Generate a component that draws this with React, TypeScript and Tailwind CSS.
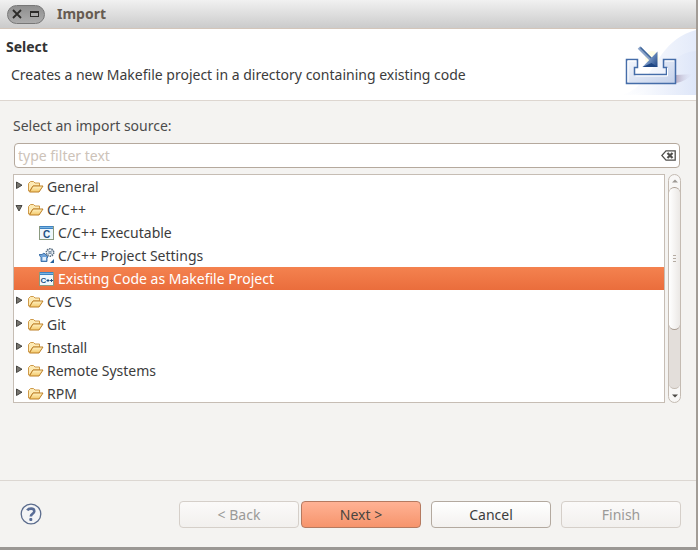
import type { ReactNode } from "react";

function FolderIcon() {
  return (
    <svg width="16" height="16" viewBox="0 0 16 16" className="shrink-0" aria-hidden="true">
      <defs>
        <linearGradient id="folderFill" x1="0" y1="0" x2="0" y2="1">
          <stop offset="0" stopColor="#fff3c4" />
          <stop offset="1" stopColor="#f3c768" />
        </linearGradient>
      </defs>
      <path d="M.5 12V4.500l2-2h3l1.500 1.500h4.500V7H5l-3.500 5z" fill="#fdeab4" stroke="#cf9a4a" />
      <path d="M5 7h10l-4 6H1.500z" fill="url(#folderFill)" stroke="#bd8028" strokeLinejoin="round" />
    </svg>
  );
}

function CodeIcon({ label }: { label: string }) {
  const wide = label.length > 1;
  return (
    <svg width="16" height="16" viewBox="0 0 16 16" className="shrink-0" aria-hidden="true">
      <rect x=".5" y="1.500" width="14" height="13" fill="#eff6fb" stroke="#8b9a80" />
      <rect x="1" y="1" width="13" height="3" fill="#3f82c2" />
      <rect x="1" y="2" width="13" height="1" fill="#78b4e2" />
      <text
        x={wide ? 1.5 : 7.5}
        y={wide ? 12 : 12.5}
        textAnchor={wide ? "start" : "middle"}
        fontFamily="'Liberation Sans', sans-serif"
        fontWeight="bold"
        fontSize={wide ? 8 : 10}
        fill="#1d4f84"
      >
        {label[0]}
      </text>
      {wide && <path d="M7.500 9.500h3M9 8v3M11 9.500h3M12.500 8v3" stroke="#1d4f84" />}
    </svg>
  );
}

function SettingsIcon() {
  return (
    <svg width="16" height="16" viewBox="0 0 16 16" className="shrink-0" aria-hidden="true">
      <circle cx="11" cy="4.500" r="3.700" fill="#f4f8fc" stroke="#5b6f82" strokeWidth="1.500" strokeDasharray="1.500 .8" />
      <path d="M8.500 2l5 5M13.500 2l-5 5" stroke="#526b84" strokeWidth=".8" />
      <circle cx="11" cy="4.500" r="1" fill="#fff" stroke="#3f5f80" strokeWidth=".7" />
      <path d="M0 6.500h3l2-1.500 4 4-1 1v3.500H2V9.500z" fill="#6fa2d8" stroke="#376ca6" strokeWidth=".9" />
      <path d="M3.500 9h3.500v3.500H3.500z" fill="#e1eefa" />
      <path d="M15 11v4h-4z" fill="#24619c" />
    </svg>
  );
}

function Arrow({ open }: { open?: boolean }) {
  return (
    <svg width="8" height="9" viewBox="0 0 8 9" className="shrink-0" aria-hidden="true">
      <path
        d={open ? "M1 1.500h6L4 7z" : "M1.500 1v6.500L7 4.200z"}
        fill="#77756f"
        stroke="#3c3b37"
        strokeWidth=".9"
      />
    </svg>
  );
}

function ImportBanner() {
  return (
    <svg width="75" height="66" viewBox="0 0 75 66" className="shrink-0" aria-hidden="true">
      <defs>
        <linearGradient id="sweep" x1="0" y1="0" x2="1" y2="0">
          <stop offset="0" stopColor="#ffffff" />
          <stop offset="1" stopColor="#dbe4f8" />
        </linearGradient>
        <linearGradient id="tray" x1="0" y1="0" x2="1" y2="1">
          <stop offset="0" stopColor="#f5f8fd" />
          <stop offset="1" stopColor="#c3d0ea" />
        </linearGradient>
        <linearGradient id="trayShadow" x1="0" y1="0" x2="1" y2="0">
          <stop offset="0" stopColor="#b9aec4" />
          <stop offset="1" stopColor="#d9e2f7" stopOpacity="0" />
        </linearGradient>
        <linearGradient id="arrowHead" x1="0" y1=".3" x2="1" y2="1">
          <stop offset="0" stopColor="#c3d4ec" />
          <stop offset=".5" stopColor="#6486b8" />
          <stop offset="1" stopColor="#1d4484" />
        </linearGradient>
      </defs>
      <path d="M0 66C20 62 30 40 41 25 50 13 60 5 75 1v65z" fill="url(#sweep)" opacity=".75" />
      <path d="M10 66C30 62 38 48 48 36c8-9 16-13 27-14v44z" fill="url(#sweep)" opacity=".7" />
      <path d="M55 54V46l17-1c-4 4-10 8-17 9z" fill="url(#trayShadow)" />
      <circle cx="31" cy="29" r="7" fill="#fffce0" opacity=".8" />
      <path
        d="M5.500 30.500h11v8h-3v7h32v-7h-3v-8h12v24h-49z"
        fill="url(#tray)"
        stroke="#456da9"
        strokeWidth="1.500"
      />
      <path d="M15 32h-8v21M44 32h9M14.500 47h32v-8" stroke="#ffffff" fill="none" />
      <path d="M18 18.500l12 12" stroke="#8aa3c8" strokeWidth="3.500" />
      <path d="M19.500 18.500l12 12" stroke="#3f6699" strokeWidth="1.400" />
      <path d="M36.500 22.500V38H21.500z" fill="url(#arrowHead)" />
      <path d="M36.500 38h-15l9-4z" fill="#1e4684" />
    </svg>
  );
}

type Node = { label: string; icon: ReactNode; level: number; open?: boolean; selected?: boolean };

const nodes: Node[] = [
  { label: "General", icon: <FolderIcon />, level: 1 },
  { label: "C/C++", icon: <FolderIcon />, level: 1, open: true },
  { label: "C/C++ Executable", icon: <CodeIcon label="C" />, level: 2 },
  { label: "C/C++ Project Settings", icon: <SettingsIcon />, level: 2 },
  { label: "Existing Code as Makefile Project", icon: <CodeIcon label="C++" />, level: 2, selected: true },
  { label: "CVS", icon: <FolderIcon />, level: 1 },
  { label: "Git", icon: <FolderIcon />, level: 1 },
  { label: "Install", icon: <FolderIcon />, level: 1 },
  { label: "Remote Systems", icon: <FolderIcon />, level: 1 },
  { label: "RPM", icon: <FolderIcon />, level: 1 },
];

function TreeRow({ node }: { node: Node }) {
  const top = node.level === 1;
  return (
    <li
      role="treeitem"
      aria-level={node.level}
      aria-expanded={top ? !!node.open : undefined}
      aria-selected={!!node.selected}
      className={`flex h-[23px] items-center whitespace-nowrap ${top ? "pl-px" : "pl-[25px]"} ${
        node.selected ? "bg-linear-to-b from-[#f4824f] to-[#ea6d3c] text-white" : ""
      }`}
    >
      {top && (
        <span className="mr-[5px] flex pb-[2px]">
          <Arrow open={node.open} />
        </span>
      )}
      {node.icon}
      <span className="ml-[3px]">{node.label}</span>
    </li>
  );
}

function Scrollbar() {
  return (
    <div
      aria-hidden="true"
      className="flex w-[13px] shrink-0 flex-col overflow-hidden rounded-full border border-[#c4bbb2] bg-[#f8f7f6]"
    >
      <div className="flex h-[12px] items-center justify-center">
        <svg width="6" height="4" viewBox="0 0 6 4">
          <path d="M0 3.500L3 .5l3 3z" fill="#9d9994" />
        </svg>
      </div>
      <div className="flex flex-1 flex-col rounded-t-full rounded-b-full border-b border-[#c4bbb2] bg-[#e3deda]">
        <div className="flex h-[143px] flex-col items-center justify-center gap-[2px] rounded-full border-y border-[#a99d92] bg-linear-to-r from-white to-[#ebe8e5]">
          <span className="h-px w-[3px] bg-[#b5aca3]" />
          <span className="h-px w-[3px] bg-[#b5aca3]" />
          <span className="h-px w-[3px] bg-[#b5aca3]" />
        </div>
      </div>
      <div className="flex h-[13px] items-center justify-center">
        <svg width="6" height="4" viewBox="0 0 6 4">
          <path d="M0 .5h6l-3 3z" fill="#4c4a46" />
        </svg>
      </div>
    </div>
  );
}

const buttonBase = "h-[27px] w-[120px] rounded-[4px] border text-center leading-[25px]";
const disabledButton = "border-[#d5cfc9] bg-linear-to-b from-[#fbfaf9] to-[#f2f0ee] text-[#9b9a98]";

export default function App() {
  return (
    <div className="flex min-h-screen flex-col border-r-2 border-b-3 border-r-[#a29c96] border-b-[#9a9794] bg-[#f4f3f1] font-['Noto_Sans','Open_Sans',sans-serif] text-[14px] text-[#3c3c3c]">
      <header className="flex h-[29px] items-center border-b border-[#d3c5b9] bg-linear-to-b from-[#f1f1f1] to-[#cbcbcb] pl-[7px]">
        <div className="flex h-[19px] w-[38px] items-center justify-between rounded-full border border-[#777] bg-linear-to-b from-[#8f8f8f] to-[#acacac] px-1">
          <button aria-label="Close" className="flex">
            <svg width="10" height="10" viewBox="0 0 10 10">
              <path d="M1 1l8 8M9 1L1 9" stroke="#2c2b29" strokeWidth="1.800" />
            </svg>
          </button>
          <button aria-label="Maximize" className="flex">
            <svg width="10" height="10" viewBox="0 0 10 10">
              <rect x=".5" y="2.500" width="8" height="5" fill="#aaa" stroke="#2c2b29" />
              <path d="M0 3h9" stroke="#2c2b29" strokeWidth="2" />
            </svg>
          </button>
        </div>
        <h1 className="ml-3 pb-[2px] font-bold text-[#665b51]">Import</h1>
      </header>

      <section className="flex h-[72px] items-start justify-between border-b border-[#ddd6d0] bg-white">
        <div className="pt-2 pl-[6px]">
          <h2 className="leading-5 font-bold text-[#333]">Select</h2>
          <p className="mt-2 pl-[5px] leading-5">Creates a new Makefile project in a directory containing existing code</p>
        </div>
        <ImportBanner />
      </section>

      <main className="flex flex-1 flex-col pt-[15px] pr-[14px] pl-[13px]">
        <label htmlFor="filter" className="leading-5 text-[#4c4c4c]">
          Select an import source:
        </label>
        <div className="mt-[7px] mr-[2px] ml-px flex h-[25px] items-center rounded-[4px] border border-[#b5a99d] bg-white px-[3px]">
          <input
            id="filter"
            type="text"
            placeholder="type filter text"
            className="min-w-0 flex-1 bg-transparent outline-none placeholder:text-[#cdc3b9]"
          />
          <button aria-label="Clear filter" className="flex">
            <svg width="15" height="11" viewBox="0 0 15 11">
              <path d="M5 .8h9.200v9.400H5L.8 5.500z" fill="#fff" stroke="#4f4e4b" strokeWidth="1.300" />
              <path d="M6.500 3l5 5M11.500 3l-5 5" stroke="#4f4e4b" strokeWidth="2.200" />
            </svg>
          </button>
        </div>
        <div className="mt-[6px] mr-px flex h-[229px] gap-[3px]">
          <ul
            role="tree"
            aria-label="Import sources"
            className="min-w-0 flex-1 overflow-hidden border border-[#c6bdb4] bg-white"
          >
            {nodes.map((node) => (
              <TreeRow key={node.label} node={node} />
            ))}
          </ul>
          <Scrollbar />
        </div>
      </main>

      <footer className="flex h-[67px] items-center justify-between border-t border-[#dcd7d2] pr-[15px] pl-5">
        <button aria-label="Help" className="flex">
          <svg width="22" height="22" viewBox="0 0 22 22">
            <circle cx="11" cy="11" r="9.800" fill="#f3f4f6" stroke="#5b6c8d" strokeWidth="1.300" />
            <path
              d="M7.300 7.300C8.500 5.300 14.300 4.600 14.300 8.200c0 2.500-3.500 2.600-3.500 5.300"
              fill="none"
              stroke="#586c96"
              strokeWidth="2.600"
            />
            <rect x="9.300" y="15" width="3" height="3" rx="1" fill="#586c96" />
          </svg>
        </button>
        <div className="flex gap-[10px]">
          <div className="flex gap-[2px]">
            <button disabled className={`${buttonBase} ${disabledButton}`}>
              &lt; Back
            </button>
            <button
              className={`${buttonBase} border-[#b57a60] bg-linear-to-b from-[#ffb294] to-[#f6946c] text-[#4a4540]`}
            >
              Next &gt;
            </button>
          </div>
          <button
            className={`${buttonBase} border-[#b3a99f] bg-linear-to-b from-white to-[#f3f1ef]`}
          >
            Cancel
          </button>
          <button disabled className={`${buttonBase} ${disabledButton}`}>
            Finish
          </button>
        </div>
      </footer>
    </div>
  );
}
